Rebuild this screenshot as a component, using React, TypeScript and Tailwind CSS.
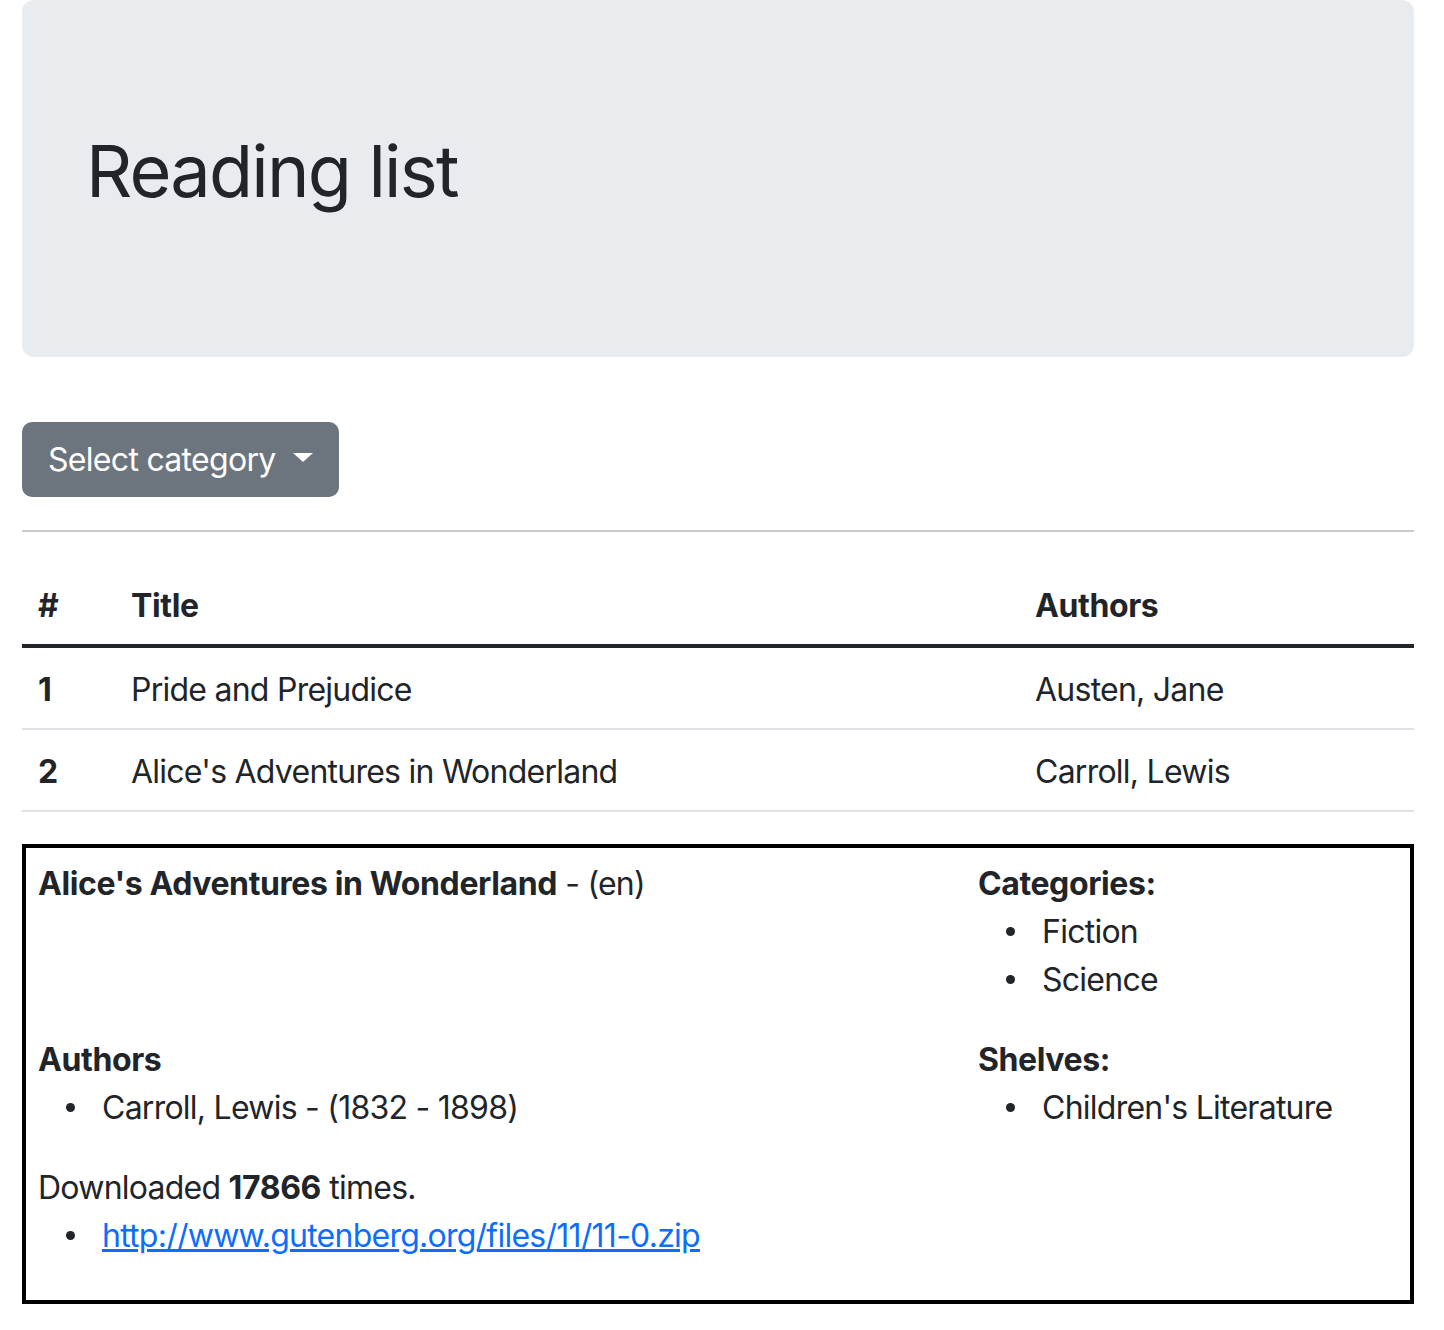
import React from "react";

function Bullet({ children }: { children: React.ReactNode }) {
  return (
    <li className="flex">
      <span className="w-[64px] shrink-0 pl-[28px] pt-[19px]">
        <span className="block w-[9px] h-[9px] rounded-full bg-[#212529]" />
      </span>
      <span>{children}</span>
    </li>
  );
}

export default function App() {
  const font = { fontFamily: "Inter, 'Noto Sans', 'Liberation Sans', sans-serif" };
  return (
    <div className="bg-white min-h-[1330px] text-[#212529] tracking-[-0.75px]" style={font}>
      <div className="ml-[22px] w-[1392px]">
        <div className="h-[357px] bg-[#e9ecef] rounded-[12px] pl-[64px] pt-[128px]">
          <h1 className="text-[72px] leading-[1.2] font-normal tracking-[-1.8px]">Reading list</h1>
        </div>

        <div className="mt-[65px]">
          <button className="h-[75px] bg-[#6c757d] text-white rounded-[10px] px-[26px] flex items-center text-[32px] leading-[48px] tracking-[-0.7px]">
            <span>Select category</span>
            <span className="ml-[17px] mt-[-4px] inline-block w-0 h-0 border-t-[9px] border-t-white border-x-[10px] border-x-transparent" />
          </button>
        </div>

        <div className="mt-[33px] h-[2px] bg-[#c8c9ca]" />

        <table className="mt-[32px] w-full border-collapse text-[32px] leading-[48px] table-fixed">
          <colgroup>
            <col className="w-[93px]" />
            <col className="w-[904px]" />
            <col />
          </colgroup>
          <thead>
            <tr className="border-b-[4px] border-[#212529]">
              <th className="text-left font-bold tracking-[-0.4px] px-[16px] pt-[18px] pb-[14px]">#</th>
              <th className="text-left font-bold tracking-[-0.4px] px-[16px] pt-[18px] pb-[14px]">Title</th>
              <th className="text-left font-bold tracking-[-0.4px] px-[16px] pt-[18px] pb-[14px]">Authors</th>
            </tr>
          </thead>
          <tbody>
            <tr className="border-b-[2px] border-[#dee2e6]">
              <td className="font-bold px-[16px] pt-[18px] pb-[14px]">1</td>
              <td className="px-[16px] pt-[18px] pb-[14px]">Pride and Prejudice</td>
              <td className="px-[16px] pt-[18px] pb-[14px]">Austen, Jane</td>
            </tr>
            <tr className="border-b-[2px] border-[#dee2e6]">
              <td className="font-bold px-[16px] pt-[18px] pb-[14px]">2</td>
              <td className="px-[16px] pt-[18px] pb-[14px]">Alice's Adventures in Wonderland</td>
              <td className="px-[16px] pt-[18px] pb-[14px]">Carroll, Lewis</td>
            </tr>
          </tbody>
        </table>

        <div className="mt-[32px] border-[4px] border-black px-[12px] pt-[12px] pb-[8px] text-[32px] leading-[48px]">
          <div className="grid grid-cols-[940px_1fr]">
            <div>
              <span className="font-bold tracking-[-0.4px]">Alice's Adventures in Wonderland</span> - (en)
            </div>
            <div>
              <div className="font-bold tracking-[-0.4px]">Categories:</div>
              <ul className="mb-[32px]">
                <Bullet>Fiction</Bullet>
                <Bullet>Science</Bullet>
              </ul>
            </div>
            <div>
              <div className="font-bold tracking-[-0.4px]">Authors</div>
              <ul className="mb-[32px]">
                <Bullet>Carroll, Lewis - (1832 - 1898)</Bullet>
              </ul>
              <div>
                Downloaded <span className="font-bold tracking-[-0.4px]">17866</span> times.
              </div>
              <ul className="mb-[32px]">
                <Bullet>
                  <a href="#" className="text-[#0d6efd] underline">
                    http://www.gutenberg.org/files/11/11-0.zip
                  </a>
                </Bullet>
              </ul>
            </div>
            <div>
              <div className="font-bold tracking-[-0.4px]">Shelves:</div>
              <ul className="mb-[32px]">
                <Bullet>Children's Literature</Bullet>
              </ul>
            </div>
          </div>
        </div>
      </div>
    </div>
  );
}
